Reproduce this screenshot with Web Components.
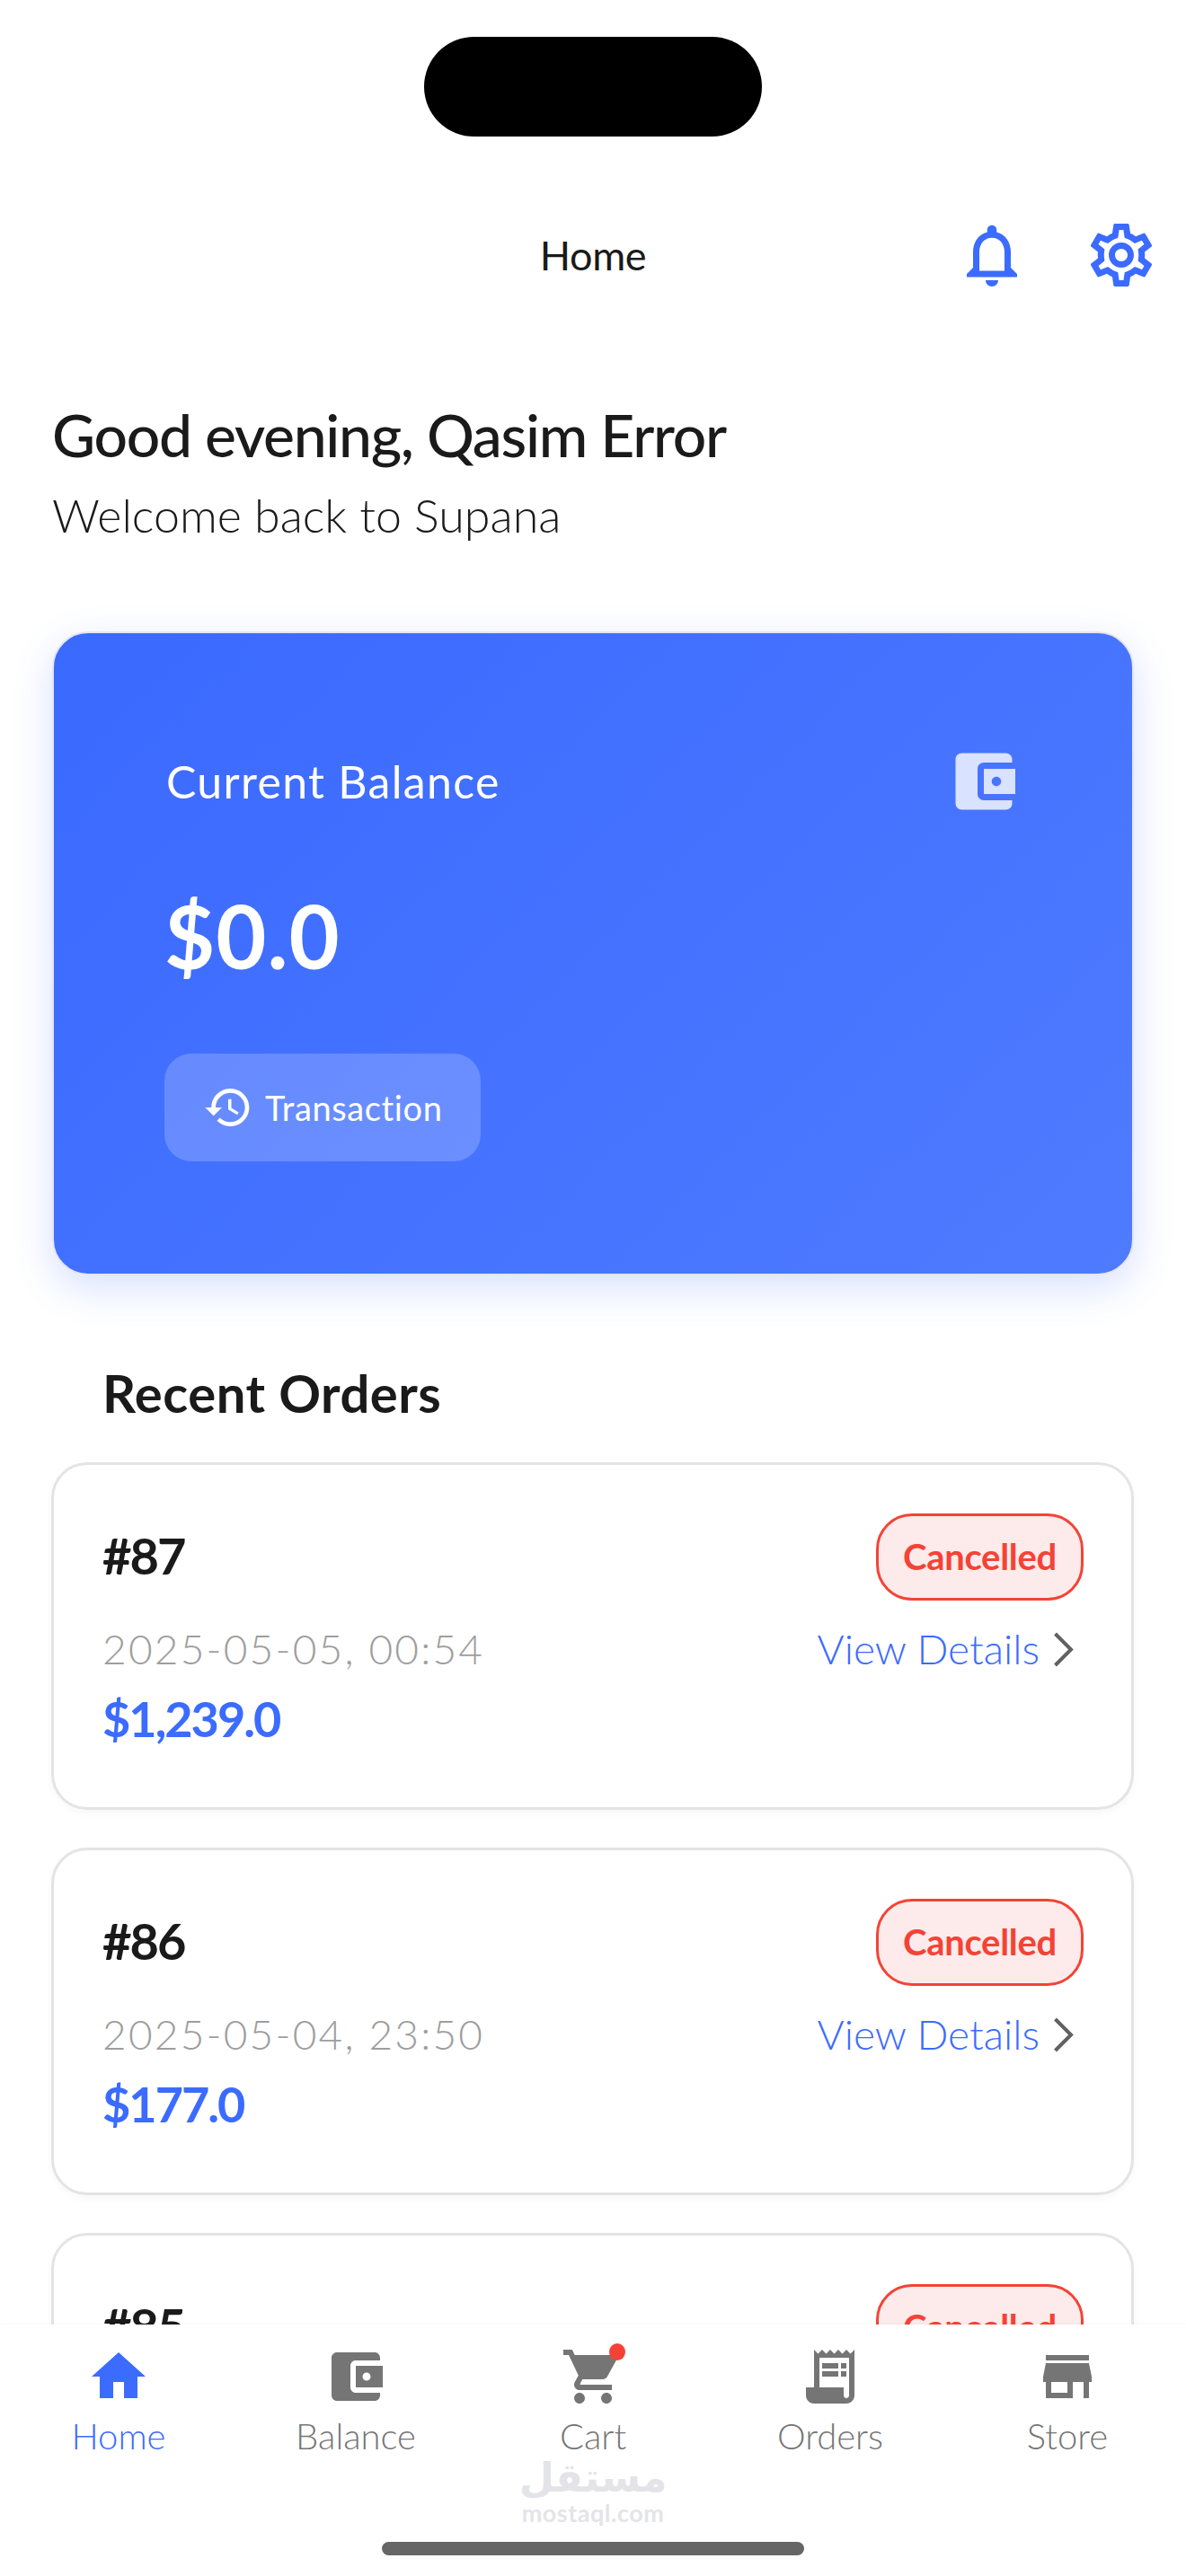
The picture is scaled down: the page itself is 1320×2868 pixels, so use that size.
<!DOCTYPE html>
<html lang="en">
<head>
<meta charset="utf-8">
<title>Supana Home</title>
<style>
    html, body { margin: 0; padding: 0; background: #fff; }
    body { font-family: Lato, "Open Sans", sans-serif; }
</style>
</head>
<body>
<app-screen>
    <top-bar title="Home"></top-bar>
    <greeting-block name="Qasim Error"></greeting-block>
    <balance-card amount="$0.0"></balance-card>
    <section-title>Recent Orders</section-title>
    <order-card number="#87" date="2025-05-05, 00:54" total="$1,239.0" status="Cancelled"></order-card>
    <order-card number="#86" date="2025-05-04, 23:50" total="$177.0" status="Cancelled"></order-card>
    <order-card number="#85" status="Cancelled"></order-card>
    <tab-bar slot="tabs">
        <tab-item icon="home" active>Home</tab-item>
        <tab-item icon="wallet">Balance</tab-item>
        <tab-item icon="cart" dot>Cart</tab-item>
        <tab-item icon="orders">Orders</tab-item>
        <tab-item icon="store">Store</tab-item>
    </tab-bar>
</app-screen>

<script>
const ICONS = {
    bell: 'M12 22c1.1 0 2-.9 2-2h-4c0 1.1.9 2 2 2zm6-6v-5c0-3.07-1.63-5.64-4.5-6.32V4c0-.83-.67-1.5-1.5-1.5s-1.5.67-1.5 1.5v.68C7.64 5.36 6 7.92 6 11v5l-2 2v1h16v-1l-2-2zm-2 1H8v-6c0-2.48 1.51-4.5 4-4.5s4 2.02 4 4.5v6z',
    gear: 'M19.43 12.98c.04-.32.07-.64.07-.98 0-.34-.03-.66-.07-.98l2.11-1.65c.19-.15.24-.42.12-.64l-2-3.46c-.09-.16-.26-.25-.44-.25-.06 0-.12.01-.17.03l-2.49 1c-.52-.4-1.08-.73-1.69-.98l-.38-2.65C14.46 2.18 14.25 2 14 2h-4c-.25 0-.46.18-.49.42l-.38 2.65c-.61.25-1.17.59-1.69.98l-2.49-1c-.06-.02-.12-.03-.18-.03-.17 0-.34.09-.43.25l-2 3.46c-.13.22-.07.49.12.64l2.11 1.65c-.04.32-.07.65-.07.98 0 .33.03.66.07.98l-2.11 1.65c-.19.15-.24.42-.12.64l2 3.46c.09.16.26.25.44.25.06 0 .12-.01.17-.03l2.49-1c.52.4 1.08.73 1.69.98l.38 2.65c.03.24.24.42.49.42h4c.25 0 .46-.18.49-.42l.38-2.65c.61-.25 1.17-.59 1.69-.98l2.49 1c.06.02.12.03.18.03.17 0 .34-.09.43-.25l2-3.46c.12-.22.07-.49-.12-.64l-2.11-1.65zm-1.98-1.71c.04.31.05.52.05.73 0 .21-.02.43-.05.73l-.14 1.13.89.7 1.08.84-.7 1.21-1.27-.51-1.04-.42-.9.68c-.43.32-.84.56-1.25.73l-1.06.43-.16 1.13-.2 1.35h-1.4l-.19-1.35-.16-1.13-1.06-.43c-.43-.18-.83-.41-1.23-.71l-.91-.7-1.06.43-1.27.51-.7-1.21 1.08-.84.89-.7-.14-1.13c-.03-.31-.05-.54-.05-.74s.02-.43.05-.73l.14-1.13-.89-.7-1.08-.84.7-1.21 1.27.51 1.04.42.9-.68c.43-.32.84-.56 1.25-.73l1.06-.43.16-1.13.2-1.35h1.39l.19 1.35.16 1.13 1.06.43c.43.18.83.41 1.23.71l.91.7 1.06-.43 1.27-.51.7 1.21-1.07.85-.89.7.14 1.13zM12 8c-2.21 0-4 1.79-4 4s1.79 4 4 4 4-1.79 4-4-1.79-4-4-4zm0 6c-1.1 0-2-.9-2-2s.9-2 2-2 2 .9 2 2-.9 2-2 2z',
    history: 'M13 3c-4.97 0-9 4.03-9 9H1l3.89 3.89.07.14L9 12H6c0-3.87 3.13-7 7-7s7 3.13 7 7-3.13 7-7 7c-1.93 0-3.68-.79-4.94-2.06l-1.42 1.42C8.27 19.99 10.51 21 13 21c4.97 0 9-4.03 9-9s-4.03-9-9-9zm-1 5v5l4.28 2.54.72-1.21-3.5-2.08V8H12z',
    wallet: 'M21 18v1c0 1.1-.9 2-2 2H5c-1.11 0-2-.9-2-2V5c0-1.1.89-2 2-2h14c1.1 0 2 .9 2 2v1h-9c-1.11 0-2 .9-2 2v8c0 1.1.89 2 2 2h9zm-9-2h10V8H12v8zm4-2.5c-.83 0-1.5-.67-1.5-1.5s.67-1.5 1.5-1.5 1.5.67 1.5 1.5-.67 1.5-1.5 1.5z',
    home: 'M10 20v-6h4v6h5v-8h3L12 3 2 12h3v8z',
    cart: 'M7 18c-1.1 0-1.99.9-1.99 2S5.9 22 7 22s2-.9 2-2-.9-2-2-2zM1 2v2h2l3.6 7.59-1.35 2.45c-.16.28-.25.61-.25.96 0 1.1.9 2 2 2h12v-2H7.42c-.14 0-.25-.11-.25-.25l.03-.12.9-1.63h7.45c.75 0 1.41-.41 1.75-1.03l3.58-6.49c.08-.14.12-.31.12-.48 0-.55-.45-1-1-1H5.21l-.94-2H1zm16 16c-1.1 0-1.99.9-1.99 2s.89 2 1.99 2 2-.9 2-2-.9-2-2-2z',
    orders: 'M19.5 3.5L18 2l-1.5 1.5L15 2l-1.5 1.5L12 2l-1.5 1.5L9 2 7.5 3.5 6 2v14H3v3c0 1.66 1.34 3 3 3h12c1.66 0 3-1.34 3-3V2l-1.5 1.5zM19 19c0 .55-.45 1-1 1s-1-.45-1-1v-3H8V5h11v14zM9 7h6v2H9zM16 7h2v2h-2zM9 10h6v2H9zM16 10h2v2h-2z',
    store: 'M20 4H4v2h16V4zm1 10v-2l-1-5H4l-1 5v2h1v6h10v-6h4v6h2v-6h1zm-9 4H6v-4h6v4z'
};

const icon = (name, size) => `<svg width="${size}" height="${size}" viewBox="0 0 24 24" fill="currentColor" aria-hidden="true"><path d="${ICONS[name]}"/></svg>`;

const screenTemplate = document.createElement('template');
screenTemplate.innerHTML = `
    <style>
        :host {
            display: flex;
            flex-direction: column;
            width: 1320px;
            height: 2868px;
            overflow: hidden;
            background: #fff;
            color: #1a1a1a;
            font-family: Lato, "Open Sans", sans-serif;
        }
        .scroll { flex: 1; min-height: 0; overflow: hidden; }
    </style>
    <div class="scroll"><slot></slot></div>
    <slot name="tabs"></slot>
`;

class AppScreen extends HTMLElement {
    constructor() {
        super();
        this.attachShadow({ mode: 'open' });
        this.shadowRoot.appendChild(screenTemplate.content.cloneNode(true));
    }
}

const topBarTemplate = document.createElement('template');
topBarTemplate.innerHTML = `
    <style>
        :host { display: block; }
        .notch {
            width: 376px;
            height: 111px;
            margin: 41px auto 90px;
            border-radius: 56px;
            background: #000;
        }
        .bar {
            display: grid;
            grid-template-columns: 1fr auto 1fr;
            align-items: center;
            height: 84px;
            padding-right: 30px;
        }
        .title { font-size: 45px; line-height: 84px; letter-spacing: -0.4px; color: #1a1a1a; padding-left: 30px; }
        .actions {
            display: flex;
            justify-content: flex-end;
            gap: 60px;
            color: #3b6bff;
        }
        svg { display: block; }
    </style>
    <div class="notch"></div>
    <div class="bar">
        <span></span>
        <span class="title"></span>
        <div class="actions">${icon('bell', 84)}${icon('gear', 84)}</div>
    </div>
`;

class TopBar extends HTMLElement {
    constructor() {
        super();
        this.attachShadow({ mode: 'open' });
        this.shadowRoot.appendChild(topBarTemplate.content.cloneNode(true));
    }

    connectedCallback() {
        this.shadowRoot.querySelector('.title').textContent = this.getAttribute('title');
    }
}

const greetingTemplate = document.createElement('template');
greetingTemplate.innerHTML = `
    <style>
        :host { display: block; padding: 114px 0 88px 58px; }
        h1 { margin: 0; font-size: 66px; line-height: 88px; font-weight: 500; letter-spacing: -1.3px; color: #1a1a1a; }
        p { margin: 3px 0 0; font-size: 52px; line-height: 84px; font-weight: 300; color: #1a1a1a; }
    </style>
    <h1></h1>
    <p>Welcome back to Supana</p>
`;

class GreetingBlock extends HTMLElement {
    constructor() {
        super();
        this.attachShadow({ mode: 'open' });
        this.shadowRoot.appendChild(greetingTemplate.content.cloneNode(true));
    }

    connectedCallback() {
        this.shadowRoot.querySelector('h1').textContent = `Good evening, ${this.getAttribute('name')}`;
    }
}

const balanceTemplate = document.createElement('template');
balanceTemplate.innerHTML = `
    <style>
        :host {
            display: block;
            box-sizing: border-box;
            width: 1204px;
            margin-left: 58px;
            padding: 123px 123px 125px;
            border: 2px solid #e3e5ee;
            border-radius: 40px;
            background: linear-gradient(135deg, #3a69ff 0%, #4f7bff 100%);
            box-shadow: 0 14px 44px rgba(59, 107, 255, 0.2);
            color: #fff;
        }
        .head { display: flex; justify-content: space-between; align-items: center; height: 84px; }
        .label { font-size: 50px; letter-spacing: 1.3px; padding-left: 2px; }
        .head svg { display: block; color: #d9e2ff; }
        .amount { margin-top: 80px; font-size: 97px; line-height: 100px; font-weight: 700; letter-spacing: 1px; }
        .btn {
            display: flex;
            align-items: center;
            gap: 13px;
            box-sizing: border-box;
            width: 352px;
            height: 120px;
            margin-top: 81px;
            padding-left: 43px;
            border-radius: 30px;
            background: rgba(255, 255, 255, 0.2);
            font-size: 38px;
            letter-spacing: 0.6px;
        }
        .btn svg { display: block; }
    </style>
    <div class="head">
        <span class="label">Current Balance</span>
        ${icon('wallet', 84)}
    </div>
    <div class="amount"></div>
    <div class="btn">${icon('history', 56)}<span>Transaction</span></div>
`;

class BalanceCard extends HTMLElement {
    constructor() {
        super();
        this.attachShadow({ mode: 'open' });
        this.shadowRoot.appendChild(balanceTemplate.content.cloneNode(true));
    }

    connectedCallback() {
        this.shadowRoot.querySelector('.amount').textContent = this.getAttribute('amount');
    }
}

const sectionTitleTemplate = document.createElement('template');
sectionTitleTemplate.innerHTML = `
    <style>
        :host {
            display: block;
            padding: 96px 0 42px 114px;
            font-size: 58px;
            line-height: 70px;
            font-weight: 700;
            letter-spacing: 0.5px;
            color: #1a1a1a;
        }
    </style>
    <slot></slot>
`;

class SectionTitle extends HTMLElement {
    constructor() {
        super();
        this.attachShadow({ mode: 'open' });
        this.shadowRoot.appendChild(sectionTitleTemplate.content.cloneNode(true));
    }
}

const orderTemplate = document.createElement('template');
orderTemplate.innerHTML = `
    <style>
        :host {
            display: block;
            box-sizing: border-box;
            width: 1205px;
            height: 387px;
            margin: 0 0 42px 57px;
            padding: 54px 53px 0 54px;
            border: 3px solid #e4e4e6;
            border-radius: 40px;
            background: #fff;
            box-shadow: 0 4px 8px rgba(0, 0, 0, 0.03);
        }
        .row { display: flex; justify-content: space-between; align-items: center; }
        .number { font-size: 56px; font-weight: 700; letter-spacing: -2px; color: #1a1a1a; margin-top: -4px; }
        .badge {
            box-sizing: border-box;
            width: 231px;
            height: 97px;
            border: 3px solid #f44336;
            border-radius: 40px;
            background: #fcebea;
            color: #f44336;
            font-size: 40px;
            font-weight: 700;
            letter-spacing: -0.3px;
            line-height: 91px;
            text-align: center;
        }
        .mid { margin-top: 24px; height: 60px; line-height: 60px; }
        .date { font-size: 46px; font-weight: 300; color: #9e9e9e; letter-spacing: 2.2px; }
        .link {
            display: flex;
            align-items: center;
            gap: 15px;
            margin-right: 11px;
            font-size: 46px;
            font-weight: 300;
            color: #3b6bff;
        }
        .link svg { display: block; }
        .total { margin-top: 14px; font-size: 54px; line-height: 68px; font-weight: 700; letter-spacing: -2px; color: #3b6bff; }
    </style>
    <div class="row">
        <span class="number"></span>
        <span class="badge"></span>
    </div>
    <div class="row mid">
        <span class="date"></span>
        <span class="link">View Details
            <svg width="23" height="39" viewBox="0 0 23 39" fill="none" stroke="#616161" stroke-width="4" aria-hidden="true"><polyline points="2.5,2 20,19.5 2.5,37"/></svg>
        </span>
    </div>
    <div class="total"></div>
`;

class OrderCard extends HTMLElement {
    constructor() {
        super();
        this.attachShadow({ mode: 'open' });
        this.shadowRoot.appendChild(orderTemplate.content.cloneNode(true));
    }

    connectedCallback() {
        const root = this.shadowRoot;
        root.querySelector('.number').textContent = this.getAttribute('number');
        root.querySelector('.badge').textContent = this.getAttribute('status');
        // the last card is cut off by the tab bar, only its head shows
        if (!this.hasAttribute('date')) {
            root.querySelector('.mid').remove();
            root.querySelector('.total').remove();
            return;
        }
        root.querySelector('.date').textContent = this.getAttribute('date');
        root.querySelector('.total').textContent = this.getAttribute('total');
    }
}

const tabBarTemplate = document.createElement('template');
tabBarTemplate.innerHTML = `
    <style>
        :host {
            display: block;
            position: relative;
            height: 280px;
            background: #fff;
            box-shadow: 0 -1px 3px rgba(0, 0, 0, 0.03);
        }
        .tabs { display: grid; grid-template-columns: repeat(5, 264px); padding-top: 22px; }
        .mark {
            display: flex;
            flex-direction: column;
            align-items: center;
            color: #e4e4e8;
            height: 76px;
        }
        .ar { margin-top: -4px; font-family: "DejaVu Sans", sans-serif; font-size: 45px; line-height: 52px; font-weight: 700; }
        .en { font-size: 27px; line-height: 26px; font-weight: 700; letter-spacing: 0.5px; }
        .indicator {
            width: 470px;
            height: 15px;
            margin: 17px auto 0;
            border-radius: 8px;
            background: #666;
        }
    </style>
    <div class="tabs"><slot></slot></div>
    <div class="mark"><span class="ar" lang="ar">مستقل</span><span class="en">mostaql.com</span></div>
    <div class="indicator"></div>
`;

class TabBar extends HTMLElement {
    constructor() {
        super();
        this.attachShadow({ mode: 'open' });
        this.shadowRoot.appendChild(tabBarTemplate.content.cloneNode(true));
    }
}

const tabItemTemplate = document.createElement('template');
tabItemTemplate.innerHTML = `
    <style>
        :host {
            display: flex;
            flex-direction: column;
            align-items: center;
            color: #757575;
            height: 127px;
        }
        :host([active]) { color: #3b6bff; }
        .icon { position: relative; width: 72px; height: 72px; }
        .icon svg { display: block; }
        .dot {
            display: none;
            position: absolute;
            top: -1px;
            left: 54px;
            width: 18px;
            height: 19px;
            border-radius: 50%;
            background: #f44336;
        }
        :host([dot]) .dot { display: block; }
        .label { margin-top: 5px; font-size: 40px; line-height: 50px; font-weight: 300; }
    </style>
    <div class="icon"><span class="dot"></span></div>
    <div class="label"><slot></slot></div>
`;

class TabItem extends HTMLElement {
    constructor() {
        super();
        this.attachShadow({ mode: 'open' });
        this.shadowRoot.appendChild(tabItemTemplate.content.cloneNode(true));
    }

    connectedCallback() {
        const box = this.shadowRoot.querySelector('.icon');
        box.insertAdjacentHTML('afterbegin', icon(this.getAttribute('icon'), 72));
    }
}

customElements.define('app-screen', AppScreen);
customElements.define('top-bar', TopBar);
customElements.define('greeting-block', GreetingBlock);
customElements.define('balance-card', BalanceCard);
customElements.define('section-title', SectionTitle);
customElements.define('order-card', OrderCard);
customElements.define('tab-bar', TabBar);
customElements.define('tab-item', TabItem);
</script>
</body>
</html>
